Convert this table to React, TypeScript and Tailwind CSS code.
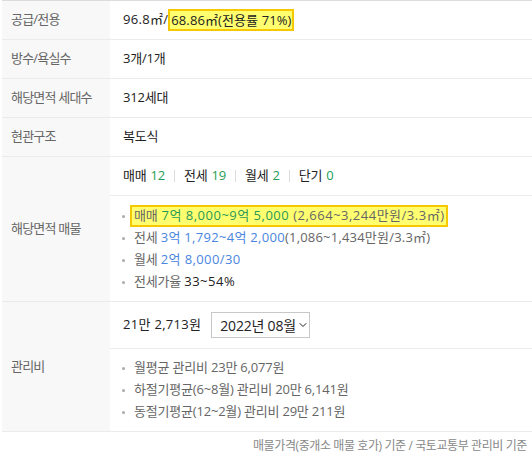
import { ChevronDown } from "lucide-react";

const font = { fontFamily: '"Open Sans", "Noto Sans CJK KR", sans-serif' };

function Row({ label, children, className = "" }: { label: string; children: React.ReactNode; className?: string }) {
  return (
    <div className={`flex border-b border-[#ebebeb] ${className}`}>
      <div className="w-[108px] shrink-0 bg-[#f8f8f8] pl-[9px] flex items-center text-[#666] tracking-[-0.8px]">{label}</div>
      <div className="flex-1 min-w-0">{children}</div>
    </div>
  );
}

function Simple({ children }: { children: React.ReactNode }) {
  return <div className="h-[38px] flex items-center pl-[13px] text-[#222]">{children}</div>;
}

function Dot() {
  return <span className="w-[3px] h-[3px] rounded-full bg-[#aaa] mr-[5px] shrink-0" />;
}

const counts = [
  { k: "매매", v: "12" },
  { k: "전세", v: "19" },
  { k: "월세", v: "2" },
  { k: "단기", v: "0" },
];

export default function App() {
  return (
    <div className="w-[532px] h-[457px] bg-white pl-[2px] text-[13px] tracking-[-0.2px]" style={font}>
      <div className="border-t border-[#dcdcdc]">
        <Row label="공급/전용">
          <Simple>
            <span className="tracking-[0.3px]">96.8㎡/</span>
            <span className="bg-[#ffff70] border-2 border-[#f5c800] px-[1px] leading-[18px] tracking-[0.1px]">68.86㎡(전용률 71%)</span>
          </Simple>
        </Row>
        <Row label="방수/욕실수">
          <Simple>3개/1개</Simple>
        </Row>
        <Row label="해당면적 세대수">
          <Simple>312세대</Simple>
        </Row>
        <Row label="현관구조">
          <Simple>복도식</Simple>
        </Row>
        <Row label="해당면적 매물">
          <div className="h-[39px] flex items-center pl-[13px] border-b border-[#ebebeb] text-[#222]">
            {counts.map((c, i) => (
              <span key={c.k} className="flex items-center">
                {i > 0 && <span className="w-px h-[12px] bg-[#ddd] mx-[9px]" />}
                {c.k}
                <span className="text-[#1f9d55] ml-[4px]">{c.v}</span>
              </span>
            ))}
          </div>
          <div className="pl-[12px] pt-[9px] pb-[8px] text-[#666]">
            <div className="h-[22px] flex items-center">
              <Dot />
              <span className="bg-[#ffff70] border-2 border-[#f5c800] px-[2px] h-[22px] flex items-center">
                매매 <span className="text-[#2a9a56] ml-[4px] tracking-[0.5px]">7억 8,000~9억 5,000</span>
                <span className="ml-[4px] tracking-[0.5px]">(2,664~3,244만원/3.3㎡)</span>
              </span>
            </div>
            <div className="h-[22px] flex items-center">
              <Dot />
              <span className="pl-[4px]">
                전세 <span className="text-[#4a86e0] tracking-[0.3px]">3억 1,792~4억 2,000</span>
                <span className="tracking-[0.2px]">(1,086~1,434만원/3.3㎡)</span>
              </span>
            </div>
            <div className="h-[22px] flex items-center">
              <Dot />
              <span className="pl-[4px]">
                월세 <span className="text-[#4a86e0] tracking-[0.4px]">2억 8,000/30</span>
              </span>
            </div>
            <div className="h-[22px] flex items-center">
              <Dot />
              <span className="pl-[4px]">
                전세가율 <span className="text-[#222] tracking-[0.5px]">33~54%</span>
              </span>
            </div>
          </div>
        </Row>
        <Row label="관리비">
          <div className="h-[47px] flex items-center pl-[13px] border-b border-[#ebebeb] text-[#222]">
            <span className="tracking-[0.3px]">21만 2,713원</span>
            <span className="ml-[10px] h-[26px] w-[99px] border border-[#c8c8c8] flex items-center pl-[8px] text-[14px]">
              2022년 08월
              <ChevronDown size={12} strokeWidth={2} className="ml-[1px]" />
            </span>
          </div>
          <div className="pl-[12px] pt-[8px] pb-[8px] text-[#666]">
            {[
              "월평균 관리비 23만 6,077원",
              "하절기평균(6~8월) 관리비 20만 6,141원",
              "동절기평균(12~2월) 관리비 29만 211원",
            ].map((t) => (
              <div key={t} className="h-[22px] flex items-center">
                <Dot />
                <span className="pl-[4px]">{t}</span>
              </div>
            ))}
          </div>
        </Row>
        <div className="h-[27px] flex items-center justify-end pr-[5px] text-[12px] text-[#888] tracking-[-0.4px]">
          매물가격(중개소 매물 호가) 기준 / 국토교통부 관리비 기준
        </div>
      </div>
    </div>
  );
}
